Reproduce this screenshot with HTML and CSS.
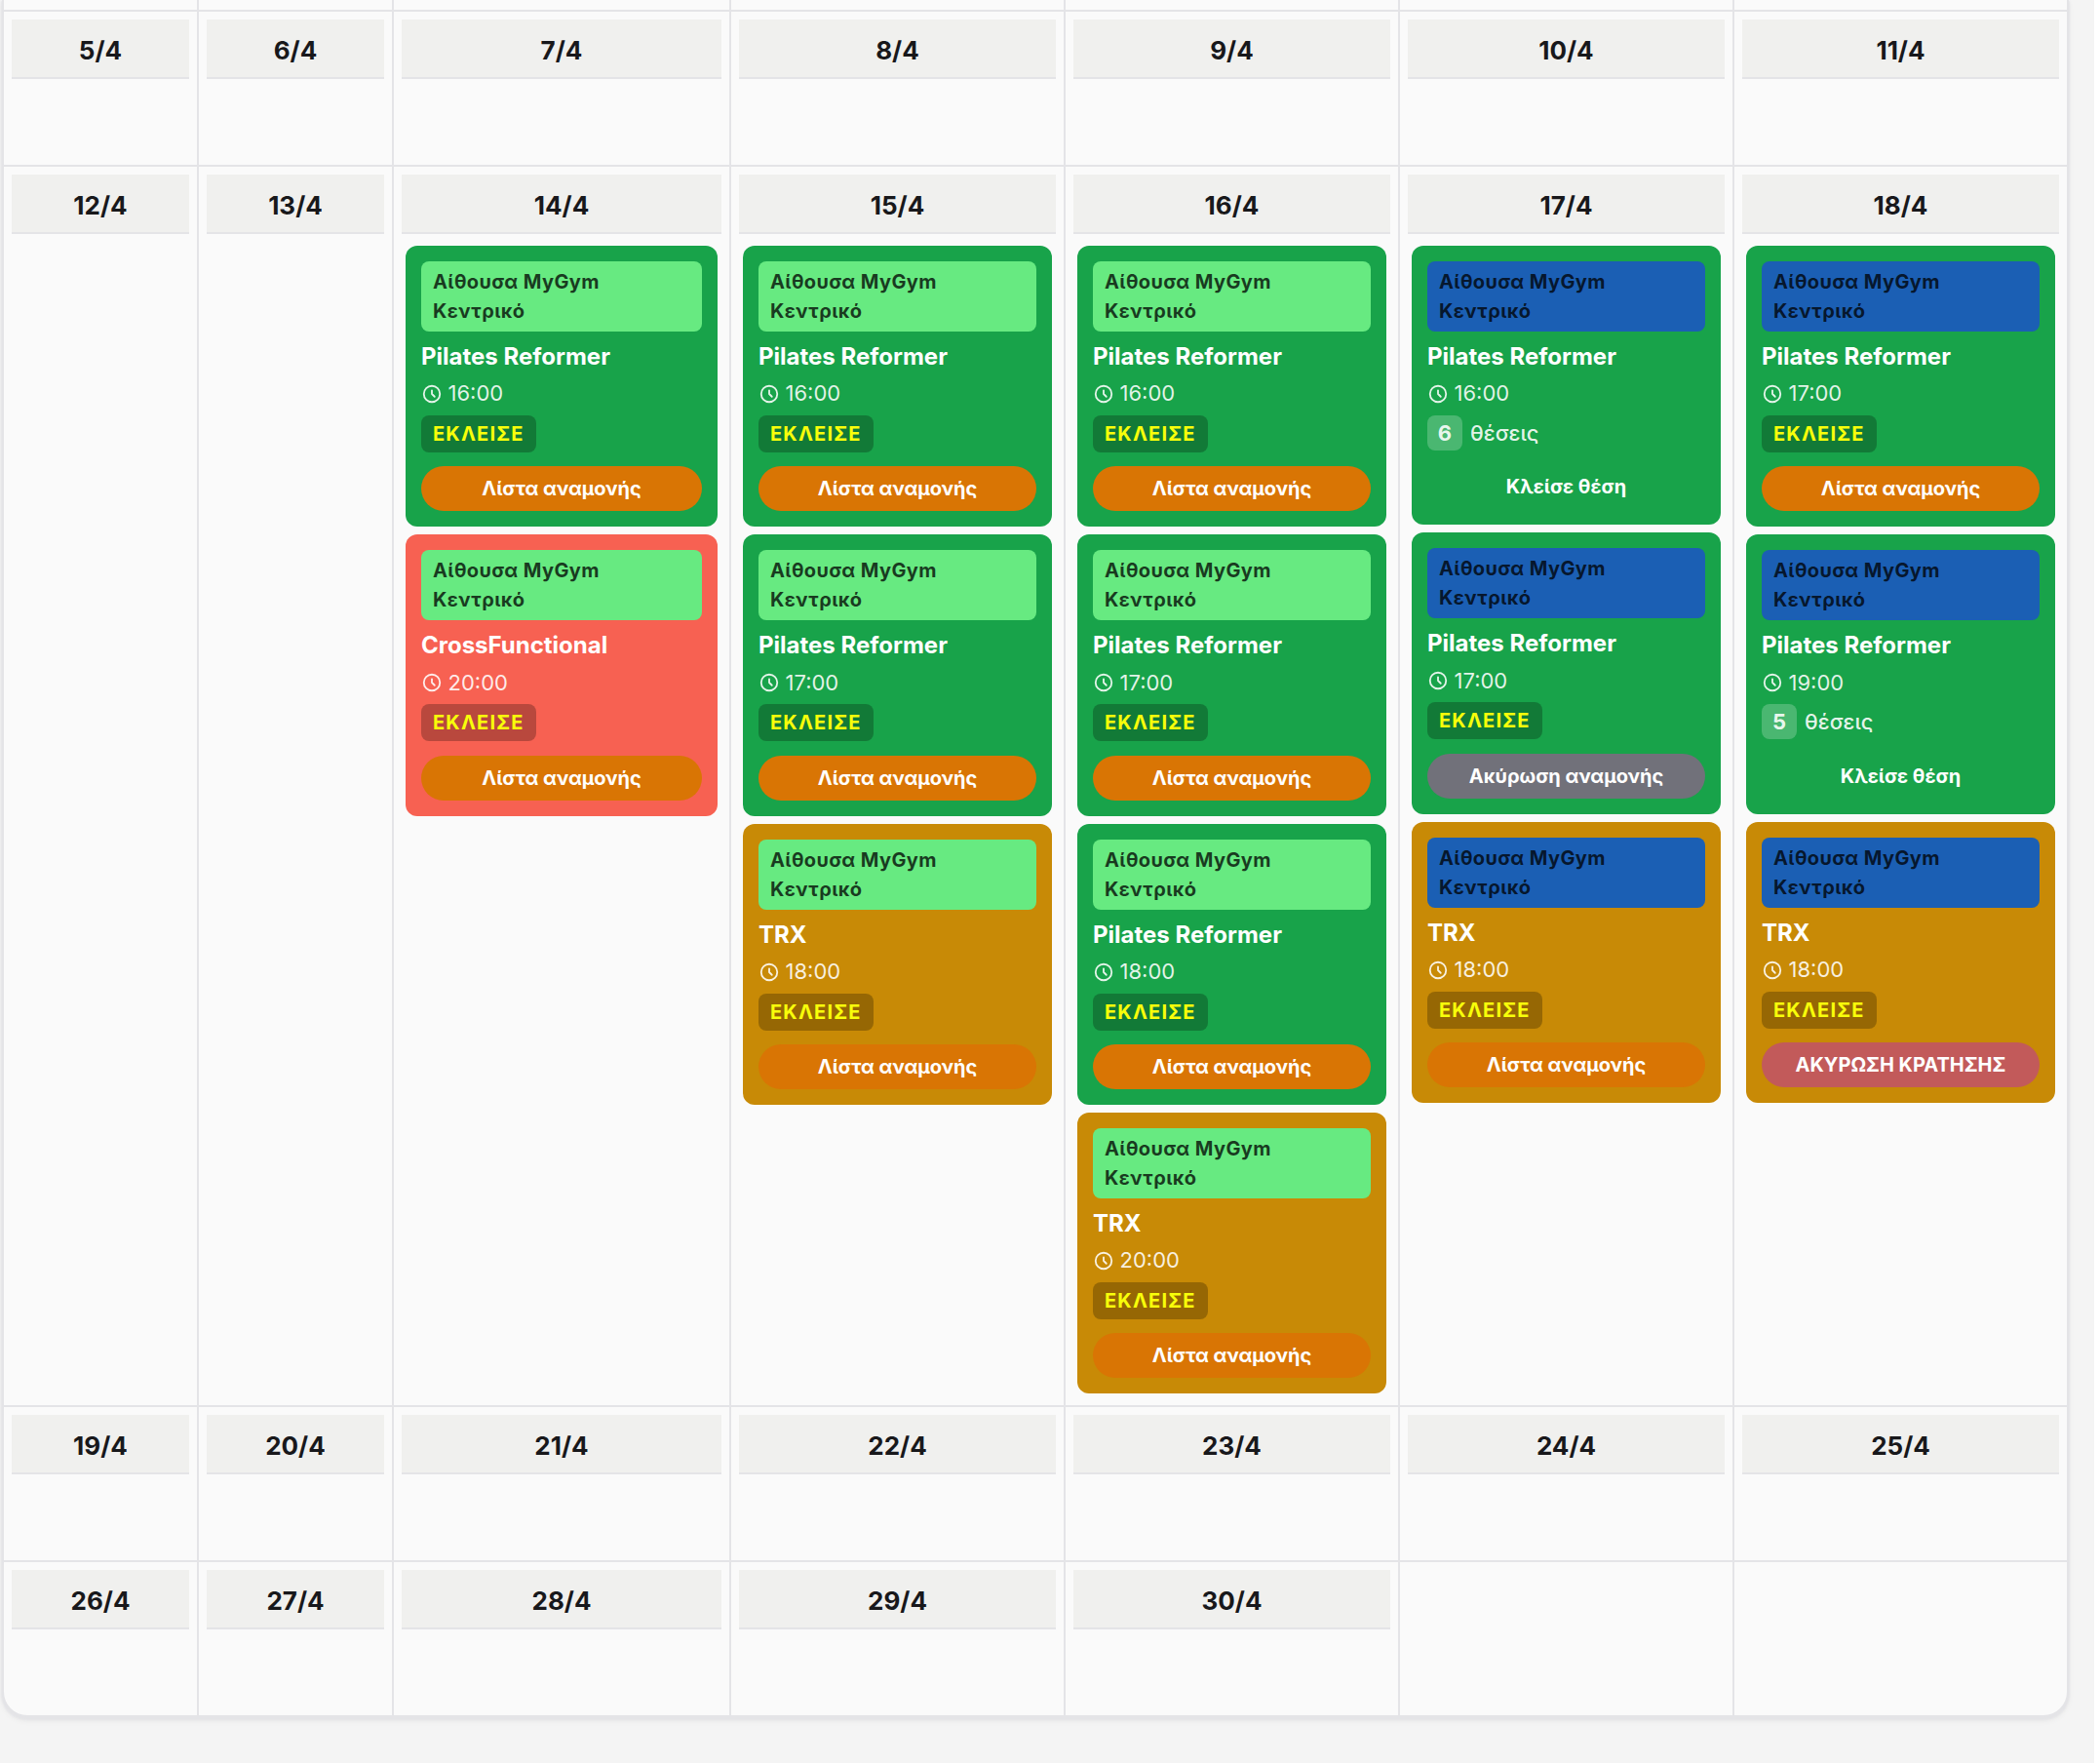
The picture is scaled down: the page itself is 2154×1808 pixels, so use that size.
FILE: index.html
```
<!DOCTYPE html>
<html lang="el">
<head>
  <meta charset="UTF-8">
  <title>Πρόγραμμα</title>
  <link rel="stylesheet" href="styles.css">
</head>
<body>
  <div class="page">
    <div class="calendar" id="calendar"></div>
  </div>
  <script src="script.js"></script>
</body>
</html>
```
FILE: styles.css
```
* {
  box-sizing: border-box;
}

body {
  margin: 0;
  background: #fff;
  font-family: Inter, "Liberation Sans", sans-serif;
}

.page {
  width: 2148px;
  height: 1808px;
  padding: 0 26px 0 2px;
  background: #f4f4f4;
  overflow: hidden;
}

.calendar {
  display: grid;
  grid-template-columns: 198px 198px 344px repeat(4, 341px);
  grid-template-rows: 10px 157px 1270px 157px 157px;
  gap: 2px;
  width: 2120px;
  background: #e4e4e7;
  border: 2px solid #e4e4e7;
  border-top: none;
  border-radius: 0 0 26px 26px;
  box-shadow: 0 2px 2px 1px #e4e4e7, 0 4px 6px rgba(0, 0, 0, 0.05);
  overflow: hidden;
}

.day {
  padding: 8px;
  background: #fafafa;
}

.day-empty {
  padding: 0;
}

.day-head {
  padding: 12px 0 8px;
  border-bottom: 2px solid #e4e4e7;
  background: #f0f0ee;
  color: #18181b;
  font-size: 26px;
  font-weight: 700;
  line-height: 39px;
  text-align: center;
}

.classes {
  display: flex;
  flex-direction: column;
  gap: 8px;
  padding: 12px 4px 4px;
}

.class-card {
  padding: 16px;
  border-radius: 12px;
  color: #fff;
}

.pilates { background: #18a34a; }
.cross { background: #f76152; }
.trx { background: #c88a06; }

.room {
  padding: 6px 12px;
  border-radius: 8px;
  color: rgba(0, 0, 0, 0.75);
  font-size: 20px;
  font-weight: 700;
  line-height: 30px;
  letter-spacing: 0.4px;
}

.room-green { background: #67ea81; }
.room-blue { background: #1b5fb4; }

.class-name {
  margin-top: 9px;
  font-size: 24px;
  font-weight: 700;
  line-height: 33.6px;
}

.time {
  display: flex;
  align-items: center;
  gap: 5.5px;
  margin: 4.75px 0 5.8px;
  color: rgba(255, 255, 255, 0.88);
  font-size: 22px;
  line-height: 33px;
}

.time svg {
  width: 22px;
  height: 22px;
  fill: none;
  stroke: currentColor;
  stroke-width: 2;
  stroke-linecap: round;
  stroke-linejoin: round;
}

.closed {
  width: fit-content;
  padding: 4px 12px;
  border-radius: 8px;
  background: rgba(0, 0, 0, 0.25);
  color: #f8ff0a;
  font-size: 20px;
  font-weight: 700;
  line-height: 30px;
  letter-spacing: 1.2px;
}

.seats {
  display: flex;
  align-items: center;
  gap: 8px;
  color: rgba(255, 255, 255, 0.9);
  font-size: 22px;
  font-weight: 500;
}

.seats b {
  width: 36px;
  border-radius: 8px;
  background: rgba(255, 255, 255, 0.22);
  font-weight: 700;
  line-height: 36px;
  text-align: center;
}

.btn {
  display: block;
  width: 100%;
  height: 46px;
  margin-top: 14.2px;
  padding: 0;
  border: none;
  border-radius: 23px;
  background: transparent;
  color: #fff;
  font-family: inherit;
  font-size: 20px;
  font-weight: 700;
}

.btn-wait { background: #d97504; }
.btn-leave { background: #71717a; }
.btn-cancel { background: #c25a5a; }
```
FILE: script.js
```
var columns = 7;

var buttons = {
  wait: 'Λίστα αναμονής',
  leave: 'Ακύρωση αναμονής',
  cancel: 'ΑΚΥΡΩΣΗ ΚΡΑΤΗΣΗΣ',
  book: 'Κλείσε θέση'
};

var names = {
  pilates: 'Pilates Reformer',
  cross: 'CrossFunctional',
  trx: 'TRX'
};

// [type, time, room colour, button, free seats]
var classes = {
  14: [['pilates', '16:00', 'green', 'wait'], ['cross', '20:00', 'green', 'wait']],
  15: [['pilates', '16:00', 'green', 'wait'], ['pilates', '17:00', 'green', 'wait'], ['trx', '18:00', 'green', 'wait']],
  16: [['pilates', '16:00', 'green', 'wait'], ['pilates', '17:00', 'green', 'wait'], ['pilates', '18:00', 'green', 'wait'], ['trx', '20:00', 'green', 'wait']],
  17: [['pilates', '16:00', 'blue', 'book', 6], ['pilates', '17:00', 'blue', 'leave'], ['trx', '18:00', 'blue', 'wait']],
  18: [['pilates', '17:00', 'blue', 'wait'], ['pilates', '19:00', 'blue', 'book', 5], ['trx', '18:00', 'blue', 'cancel']]
};

function cardHtml(c) {
  var status = c[4] ? `<div class="seats"><b>${c[4]}</b> θέσεις</div>` : '<div class="closed">ΕΚΛΕΙΣΕ</div>';
  return `
    <div class="class-card ${c[0]}">
      <div class="room room-${c[2]}">Αίθουσα MyGym<br>Κεντρικό</div>
      <div class="class-name">${names[c[0]]}</div>
      <div class="time">
        <svg viewBox="0 0 24 24"><path d="M12 8v4l3 3m6-3a9 9 0 11-18 0 9 9 0 0118 0z"/></svg>
        <span>${c[1]}</span>
      </div>
      ${status}
      <button class="btn btn-${c[3]}">${buttons[c[3]]}</button>
    </div>`;
}

var html = '';

// End of the week above
for (var i = 0; i < columns; i++) {
  html += '<div class="day day-empty"></div>';
}

for (var day = 5; day <= 32; day++) {
  if (day > 30) {
    html += '<div class="day day-empty"></div>';
    continue;
  }
  var cards = (classes[day] || []).map(cardHtml).join('');
  html += `<div class="day"><div class="day-head">${day}/4</div>`;
  if (cards) html += `<div class="classes">${cards}</div>`;
  html += '</div>';
}

document.getElementById('calendar').innerHTML = html;
```
